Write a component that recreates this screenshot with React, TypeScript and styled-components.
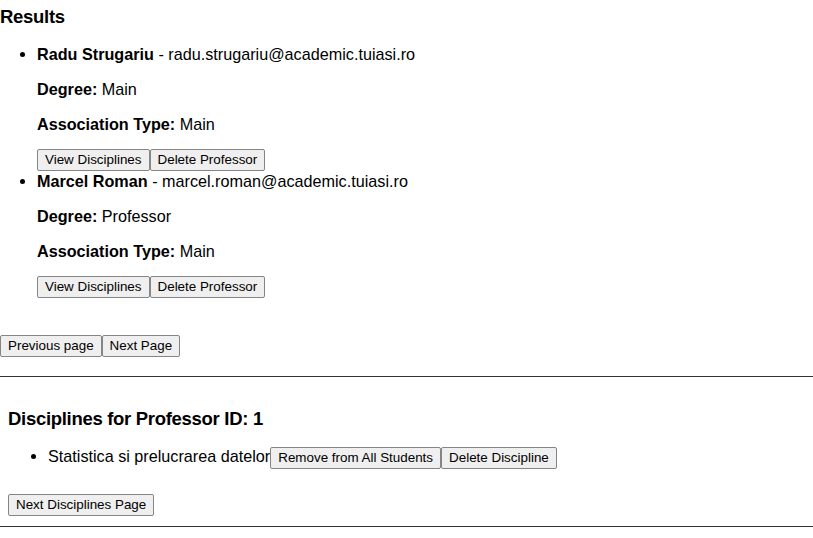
import React from "react";
import styled, { createGlobalStyle } from "styled-components";

const Global = createGlobalStyle`
  html, body { margin: 0; padding: 0; background: #fff; }
  body { font-family: "Liberation Sans", Arial, sans-serif; color: #000; font-size: 16.2px; }
`;

const Page = styled.div`
  display: flex;
  flex-direction: column;
`;

const Section = styled.section<{ $pad?: number }>`
  padding-left: ${(p) => p.$pad ?? 0}px;
`;

const Heading = styled.h2<{ $top: number; $bottom: number }>`
  font-size: 18.5px;
  font-weight: bold;
  margin: ${(p) => p.$top}px 0 ${(p) => p.$bottom}px;
  line-height: 23px;
  letter-spacing: -0.3px;
`;

const List = styled.ul<{ $indent: number }>`
  margin: 0;
  padding-left: ${(p) => p.$indent}px;
  list-style: disc;
`;

const Item = styled.li`
  line-height: 20px;
`;

const Para = styled.p`
  margin: 15px 0 0;
  line-height: 20px;
`;

const Actions = styled.div`
  display: flex;
  margin-top: 15px;
`;

const Button = styled.button`
  font-family: "Liberation Sans", Arial, sans-serif;
  font-size: 13.4px;
  height: 22px;
  padding: 0 7px;
  background: #efefef;
  border: 1px solid #858585;
  border-radius: 2px;
  color: #000;
  line-height: 20px;
`;

const Pager = styled.div<{ $top: number }>`
  display: flex;
  margin-top: ${(p) => p.$top}px;
`;

const Rule = styled.hr<{ $top: number }>`
  border: none;
  border-top: 1px solid #333;
  margin: ${(p) => p.$top}px 0 0;
  width: 100%;
`;

const DiscRow = styled.li`
  line-height: 22px;
`;

const InlineButtons = styled.span`
  display: inline-flex;
  vertical-align: middle;
`;

const professors = [
  { name: "Radu Strugariu", email: "radu.strugariu@academic.tuiasi.ro", degree: "Main", type: "Main" },
  { name: "Marcel Roman", email: "marcel.roman@academic.tuiasi.ro", degree: "Professor", type: "Main" },
];

export default function App() {
  return (
    <Page>
      <Global />
      <Section>
        <Heading $top={5} $bottom={16}>Results</Heading>
        <List $indent={37}>
          {professors.map((p) => (
            <Item key={p.email}>
              <strong>{p.name}</strong> - {p.email}
              <Para>
                <strong>Degree:</strong> {p.degree}
              </Para>
              <Para>
                <strong>Association Type:</strong> {p.type}
              </Para>
              <Actions>
                <Button>View Disciplines</Button>
                <Button>Delete Professor</Button>
              </Actions>
            </Item>
          ))}
        </List>
        <Pager $top={37}>
          <Button>Previous page</Button>
          <Button>Next Page</Button>
        </Pager>
      </Section>
      <Rule $top={19} />
      <Section $pad={8}>
        <Heading $top={30} $bottom={15}>Disciplines for Professor ID: 1</Heading>
        <List $indent={40}>
          <DiscRow>
            Statistica si prelucrarea datelor
            <InlineButtons>
              <Button>Remove from All Students</Button>
              <Button>Delete Discipline</Button>
            </InlineButtons>
          </DiscRow>
        </List>
        <Pager $top={25}>
          <Button>Next Disciplines Page</Button>
        </Pager>
      </Section>
      <Rule $top={10} />
    </Page>
  );
}
